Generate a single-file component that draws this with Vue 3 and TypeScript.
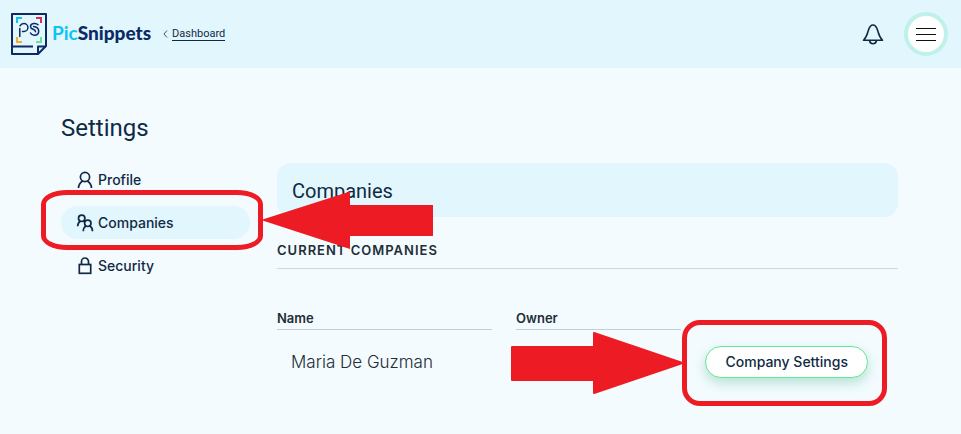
<script setup lang="ts">
import { ref } from 'vue'

interface NavItem {
  id: string
  label: string
}

const navItems: NavItem[] = [
  { id: 'profile', label: 'Profile' },
  { id: 'companies', label: 'Companies' },
  { id: 'security', label: 'Security' },
]

const active = ref<string>('companies')
const companies = ref<{ name: string; owner: string }[]>([{ name: 'Maria De Guzman', owner: '' }])
</script>

<template>
  <div class="page">
    <header class="topbar">
      <a href="#" class="brand">
        <svg class="brand-mark" viewBox="0 0 36 42" fill="none" aria-hidden="true">
          <path d="M1 1h34v32l-8 8H1z" stroke="#0b2a66" stroke-width="2" stroke-linejoin="round" />
          <path d="M1 33.5h21M27 41v-7.500h8" stroke="#0b2a66" stroke-width="2" stroke-linejoin="round" />
          <path d="M6 10V5h5" stroke="#0cc5f5" stroke-width="2" />
          <path d="M25 5h5v5" stroke="#e02b55" stroke-width="2" />
          <path d="M6 24v5h5" stroke="#f2ad2e" stroke-width="2" />
          <path d="M30 24v5h-5" stroke="#67e395" stroke-width="2" />
          <path d="M8.800 23.500v-8M9 12.800c.8-1.500 2.300-2.300 3.900-2.300a4 4 0 0 1 0 8h-1.400" stroke="#0b2a66" stroke-width="1.500" stroke-linecap="round" />
          <path d="M27 11.800c-1.700-2-7.500-1.900-7.500 1.600 0 3.500 5 2.300 5 5.300M22.600 13.600c3 .3 5.100 2 5.100 4.700 0 4.800-6.700 5-8.200 1.700" stroke="#0b2a66" stroke-width="1.500" stroke-linecap="round" />
        </svg>
        <span class="brand-name"><span class="brand-pic">Pic</span>Snippets</span>
      </a>
      <a href="#" class="back">
        <svg viewBox="0 0 5 8" class="chevron" fill="none" aria-hidden="true">
          <path d="M4 .5L1 4l3 3.500" stroke="#45586c" />
        </svg>
        <span class="back-label">Dashboard</span>
      </a>
      <div class="actions">
        <button type="button" class="bell" aria-label="Notifications">
          <svg viewBox="0 0 22 22" fill="none" stroke="#102a43" stroke-width="1.600" stroke-linejoin="round" aria-hidden="true">
            <path d="M1.500 17.300c3.300-3 3.800-6.500 4.900-10C7.500 3.600 8.500 2 11 2s3.500 1.600 4.600 5.300c1.100 3.500 1.600 7 4.900 10z" />
            <path d="M7.500 17.500c.4 2 1.700 3.200 3.500 3.200s3.100-1.200 3.500-3.200" />
          </svg>
        </button>
        <button type="button" class="menu" aria-label="Menu">
          <span class="bar"></span>
          <span class="bar"></span>
          <span class="bar"></span>
        </button>
      </div>
    </header>

    <div class="content">
      <h1 class="title">Settings</h1>
      <div class="columns">
        <nav class="side" aria-label="Settings">
          <div v-for="item in navItems" :key="item.id" class="side-row">
            <a href="#" class="side-link" :class="{ active: item.id === active }" @click.prevent="active = item.id">
              <svg class="side-icon" viewBox="0 0 18 18" fill="none" stroke="#102a43" stroke-width="1.700" aria-hidden="true">
                <template v-if="item.id === 'profile'">
                  <circle cx="9" cy="6" r="4.600" />
                  <path d="M2.500 17c.2-3.500 1.700-5.500 4.100-7M15.500 17c-.2-3.500-1.700-5.500-4.100-7" />
                </template>
                <template v-else-if="item.id === 'companies'">
                  <circle cx="5.700" cy="4.300" r="3.200" />
                  <path d="M1.700 12.300c0-2.500 1-4.100 2.700-5.300M7.500 7l1.200 1.200" />
                  <circle cx="11.800" cy="9.300" r="3.200" />
                  <path d="M7.300 17.300c0-2.500 1-4.300 2.700-5.500M16.500 17.300c0-2.500-1-4.300-2.900-5.500" />
                </template>
                <template v-else>
                  <rect x="3.300" y="7.500" width="11.400" height="8.800" />
                  <path d="M5.500 7.500v-3a3.500 3.500 0 0 1 7 0v3" />
                </template>
              </svg>
              {{ item.label }}
            </a>
            <template v-if="item.id === 'companies'">
              <span class="frame frame-nav" aria-hidden="true"></span>
              <svg class="arrow arrow-nav" viewBox="0 0 172 58" aria-hidden="true">
                <path d="M0 29L89 0.500V14h83v31H89v13z" fill="#ed1c24" />
              </svg>
            </template>
          </div>
        </nav>

        <main class="main">
          <h2 class="panel-title">Companies</h2>
          <h3 class="section-title">Current Companies</h3>
          <table class="table">
            <thead>
              <tr>
                <th class="col-name" scope="col"><span class="head">Name</span></th>
                <th class="col-owner" scope="col"><span class="head">Owner</span></th>
                <td></td>
              </tr>
            </thead>
            <tbody>
              <tr v-for="company in companies" :key="company.name">
                <td class="name">{{ company.name }}</td>
                <td>{{ company.owner }}</td>
                <td>
                  <div class="action">
                    <button type="button" class="pill">Company Settings</button>
                    <span class="frame frame-button" aria-hidden="true"></span>
                    <svg class="arrow arrow-button" viewBox="0 0 171 64" aria-hidden="true">
                      <path d="M1 16h82V2l87 29.500v1L83 62V49H1z" fill="#ed1c24" stroke="#ed1c24" stroke-width="2" stroke-linejoin="round" />
                    </svg>
                  </div>
                </td>
              </tr>
            </tbody>
          </table>
        </main>
      </div>
    </div>
  </div>
</template>

<style>
body {
  margin: 0;
  background: #f3fbff;
}
</style>

<style scoped>
.page {
  min-height: 100vh;
  box-sizing: border-box;
  color: #102a43;
  font-family: Inter, "Liberation Sans", sans-serif;
  font-size: 14px;
  overflow: hidden;
}

a {
  color: inherit;
  text-decoration: none;
}

button {
  font: inherit;
  color: inherit;
  cursor: pointer;
}

.topbar {
  display: flex;
  align-items: center;
  height: 68px;
  padding: 0 13px 0 11px;
  background: #e2f6fe;
}

.brand {
  display: flex;
  align-items: center;
  gap: 5px;
}

.brand-mark {
  width: 36px;
  height: 42px;
}

.brand-name {
  padding-bottom: 2px;
  font-family: Lato, sans-serif;
  font-size: 19px;
  font-weight: 900;
  line-height: 28px;
  color: #0b2a66;
}

.brand-pic {
  color: #0cc5f5;
  font-weight: 700;
}

.back {
  display: flex;
  align-items: center;
  gap: 4px;
  margin-left: 12px;
  font-family: Roboto, sans-serif;
  font-size: 11px;
  line-height: 13px;
}

.chevron {
  width: 5px;
  height: 8px;
}

.back-label {
  border-bottom: 1px solid #102a43;
}

.actions {
  display: flex;
  align-items: center;
  gap: 20px;
  margin-left: auto;
}

.bell {
  display: flex;
  padding: 0;
  border: 0;
  background: none;
}

.bell svg {
  width: 22px;
  height: 22px;
}

.menu {
  display: flex;
  flex-direction: column;
  align-items: center;
  justify-content: center;
  gap: 5px;
  width: 44px;
  height: 44px;
  padding: 0;
  border: 4px solid #bff1e9;
  border-radius: 50%;
  background: #fff;
}

.bar {
  width: 20px;
  height: 1px;
  background: #111;
}

.content {
  padding: 42px 63px 40px 61px;
}

.title {
  margin: 0;
  font-family: Roboto, sans-serif;
  font-size: 24px;
  font-weight: 400;
  line-height: 36px;
}

.columns {
  display: flex;
  align-items: flex-start;
  gap: 27px;
  padding-top: 17px;
}

.side {
  display: flex;
  flex-direction: column;
  flex: 0 0 189px;
  gap: 10px;
}

.side-row {
  position: relative;
}

.side-link {
  display: flex;
  align-items: center;
  gap: 4px;
  height: 33px;
  padding: 0 15px;
  border-radius: 17px;
  font-weight: 500;
}

.side-link.active {
  background: #e2f6fe;
}

.side-icon {
  width: 18px;
  height: 18px;
}

.frame {
  position: absolute;
  box-sizing: border-box;
  border: 5px solid #ed1c24;
  pointer-events: none;
}

.frame-nav {
  inset: -16px -13px -11px -20px;
  border-radius: 26px / 14px;
}

.arrow {
  position: absolute;
  pointer-events: none;
}

.arrow-nav {
  z-index: 1;
  top: -15px;
  left: 200px;
  width: 172px;
  height: 58px;
}

.main {
  flex: 1;
  min-width: 0;
}

.panel-title {
  margin: 0;
  padding: 13px 15px 11px;
  border-radius: 14px;
  background: #e2f6fe;
  font-family: Roboto, sans-serif;
  font-size: 20px;
  font-weight: 400;
  line-height: 30px;
}

.section-title {
  margin: 0;
  padding: 25px 0 9px;
  border-bottom: 1px solid #cfd9dd;
  color: #222d35;
  font-size: 13px;
  font-weight: 600;
  letter-spacing: 1px;
  line-height: 17px;
  text-transform: uppercase;
}

.table {
  width: 100%;
  margin-top: 40px;
  border-collapse: collapse;
  table-layout: fixed;
  color: #222d35;
}

.table th,
.table td {
  padding: 0;
  text-align: left;
}

.col-name {
  width: 38.5%;
}

.col-owner {
  width: 30.5%;
}

.head {
  display: block;
  margin-right: 24px;
  padding-bottom: 1px;
  border-bottom: 1px solid #c3cfd4;
  font-size: 13px;
  font-weight: 600;
  line-height: 19px;
}

.table .name {
  padding: 16px 14px 0;
  font-size: 17px;
  font-weight: 300;
  line-height: 32px;
}

.action {
  position: relative;
  width: max-content;
  padding-top: 16px;
}

.pill {
  height: 32px;
  padding: 0 19px 2px;
  border: 1px solid #66e690;
  border-radius: 16px;
  background: #fff;
  box-shadow: 0 5px 12px rgba(70, 180, 130, 0.350);
  color: #102a43;
  font-size: 14px;
  font-weight: 500;
}

.frame-button {
  inset: -10px -19px -28px -23px;
  border-radius: 18px;
}

.arrow-button {
  top: 1px;
  right: 100%;
  width: 171px;
  height: 64px;
  margin-right: 23px;
}
</style>
